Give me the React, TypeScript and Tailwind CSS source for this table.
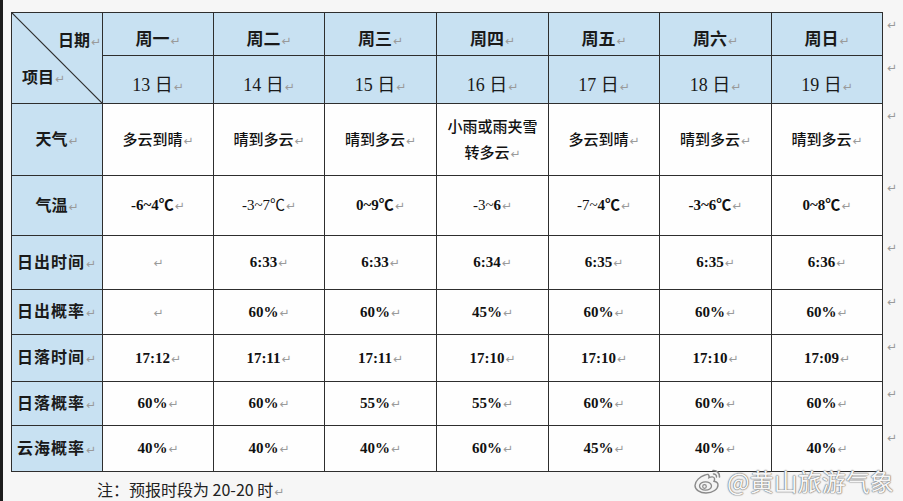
import React from "react";

const font = "font-['Liberation_Serif','Noto_Sans_CJK_SC',serif]";

const Mark = () => (
  <span className="ml-[1px] text-[12px] font-normal text-[#9a9a9a] font-['DejaVu_Sans',sans-serif]">↵</span>
);

const days = ["周一", "周二", "周三", "周四", "周五", "周六", "周日"];
const dates = ["13", "14", "15", "16", "17", "18", "19"];

const weather = ["多云到晴", "晴到多云", "晴到多云", "小雨或雨夹雪|转多云", "多云到晴", "晴到多云", "晴到多云"];

const temps: React.ReactNode[] = [
  <b>-6~4℃</b>,
  <span>-3~7℃</span>,
  <b>0~9℃</b>,
  <span>
    -3~<b>6</b>
  </span>,
  <span>
    -7~<b>4℃</b>
  </span>,
  <b>-3~6℃</b>,
  <b>0~8℃</b>,
];

const rows: { label: string; values: string[]; h: string }[] = [
  { label: "日出时间", values: ["", "6:33", "6:33", "6:34", "6:35", "6:35", "6:36"], h: "h-[54px]" },
  { label: "日出概率", values: ["", "60%", "60%", "45%", "60%", "60%", "60%"], h: "h-[45px]" },
  { label: "日落时间", values: ["17:12", "17:11", "17:11", "17:10", "17:10", "17:10", "17:09"], h: "h-[47px]" },
  { label: "日落概率", values: ["60%", "60%", "55%", "55%", "60%", "60%", "60%"], h: "h-[44px]" },
  { label: "云海概率", values: ["40%", "40%", "40%", "60%", "45%", "40%", "40%"], h: "h-[46px]" },
];

const cell = "border border-[#2e2e2e] text-center align-middle p-0";
const blue = "bg-[#c8e1f2]";
const labelCell = `${cell} ${blue} text-[16px] font-bold text-[#1a1a1a]`;
const bodyCell = `${cell} bg-[#fefefe] text-[15px] text-[#111]`;
const markCell = "align-top pt-[3px] pl-[4px] text-left leading-[16px]";

const EndMark = () => (
  <td className={markCell}>
    <span className="text-[12px] text-[#9a9a9a] font-['DejaVu_Sans',sans-serif]">↵</span>
  </td>
);

const WeiboLogo = () => (
  <svg width="30" height="28" viewBox="0 0 30 28" fill="none">
    <path
      d="M12 8c-5 1.5-10 6-10 10.5C2 23 7 26 13 26c7 0 12-4 12-8 0-2.5-2.5-3.5-4-3.8 1-2 .8-4-1.5-4.3-1.8-.2-3.6.8-3.6.8s.6-2.5-.8-3.2C14 7 13 7.6 12 8z"
      fill="#f4f4f4"
      stroke="#8a8a8a"
      strokeWidth="1.4"
    />
    <ellipse cx="12.5" cy="19" rx="6" ry="4.2" fill="#f4f4f4" stroke="#8a8a8a" strokeWidth="1.3" />
    <circle cx="11.5" cy="19.5" r="1.8" fill="none" stroke="#8a8a8a" strokeWidth="1.2" />
    <path d="M20 3.5c3.5-.5 7 2.5 6.5 6.5" stroke="#8a8a8a" strokeWidth="1.6" strokeLinecap="round" />
    <path d="M20.5 7c1.7-.2 3.2 1.2 3 3" stroke="#8a8a8a" strokeWidth="1.4" strokeLinecap="round" />
  </svg>
);

export default function App() {
  return (
    <div className={`relative w-[903px] h-[501px] overflow-hidden bg-[#f6f6f6] border-l-[3px] border-[#1c1c1c] pt-[12px] pl-[8px] ${font}`}>
      <table className="table-fixed border-collapse">
        <colgroup>
          <col className="w-[91px]" />
          <col className="w-[111px]" />
          <col className="w-[111px]" />
          <col className="w-[112px]" />
          <col className="w-[112px]" />
          <col className="w-[111px]" />
          <col className="w-[112px]" />
          <col className="w-[111px]" />
          <col className="w-[20px]" />
        </colgroup>
        <tbody>
          <tr className="h-[43px]">
            <td rowSpan={2} className={`${labelCell} relative`}>
              <svg className="absolute inset-0 h-full w-full" viewBox="0 0 100 100" preserveAspectRatio="none">
                <line x1="0" y1="0" x2="100" y2="100" stroke="#2e2e2e" strokeWidth="1.2" vectorEffect="non-scaling-stroke" />
              </svg>
              <div className="flex h-[90px] flex-col justify-between pt-[19px] pb-[15px] text-[16px] font-bold">
                <div className="text-right pr-[1px] leading-[18px]">
                  日期<Mark />
                </div>
                <div className="text-left pl-[10px] leading-[18px]">
                  项目<Mark />
                </div>
              </div>
            </td>
            {days.map((d) => (
              <td key={d} className={`${cell} ${blue} pt-[11px] text-[17px] font-bold text-[#1a1a1a]`}>
                {d}
                <Mark />
              </td>
            ))}
            <EndMark />
          </tr>
          <tr className="h-[47px]">
            {dates.map((d) => (
              <td key={d} className={`${cell} ${blue} pt-[12px] text-[18px] text-[#1a1a1a]`}>
                {d} 日<Mark />
              </td>
            ))}
            <EndMark />
          </tr>
          <tr className="h-[72px]">
            <td className={labelCell}>
              天气<Mark />
            </td>
            {weather.map((w, i) => (
              <td key={i} className={`${bodyCell} font-medium leading-[26px] font-['Noto_Sans_CJK_SC',sans-serif]`}>
                {w.split("|").map((line, j, arr) => (
                  <div key={j}>
                    {line}
                    {j === arr.length - 1 && <Mark />}
                  </div>
                ))}
              </td>
            ))}
            <EndMark />
          </tr>
          <tr className="h-[60px]">
            <td className={labelCell}>
              气温<Mark />
            </td>
            {temps.map((t, i) => (
              <td key={i} className={bodyCell}>
                {t}
                <Mark />
              </td>
            ))}
            <EndMark />
          </tr>
          {rows.map((r) => (
            <tr key={r.label} className={r.h}>
              <td className={`${labelCell} tracking-[1px]`}>
                {r.label}
                <Mark />
              </td>
              {r.values.map((v, i) => (
                <td key={i} className={`${bodyCell} font-bold`}>
                  {v}
                  <Mark />
                </td>
              ))}
              <EndMark />
            </tr>
          ))}
        </tbody>
      </table>

      <div className="mt-[8px] pl-[86px] text-[16px] leading-[18px] text-[#222] font-['Noto_Sans_CJK_SC',sans-serif]">
        注：预报时段为 20-20 时<Mark />
      </div>

      <div className="absolute left-[690px] top-[466px] flex items-center gap-[4px]">
        <WeiboLogo />
        <span className="text-[24px] leading-[30px] text-[#f6f6f6] font-['Noto_Sans_CJK_SC',sans-serif] [text-shadow:0_0_1px_#6f6f6f,0_0_1px_#6f6f6f,0_0_2px_#9a9a9a]">
          @黄山旅游气象
        </span>
      </div>
    </div>
  );
}
